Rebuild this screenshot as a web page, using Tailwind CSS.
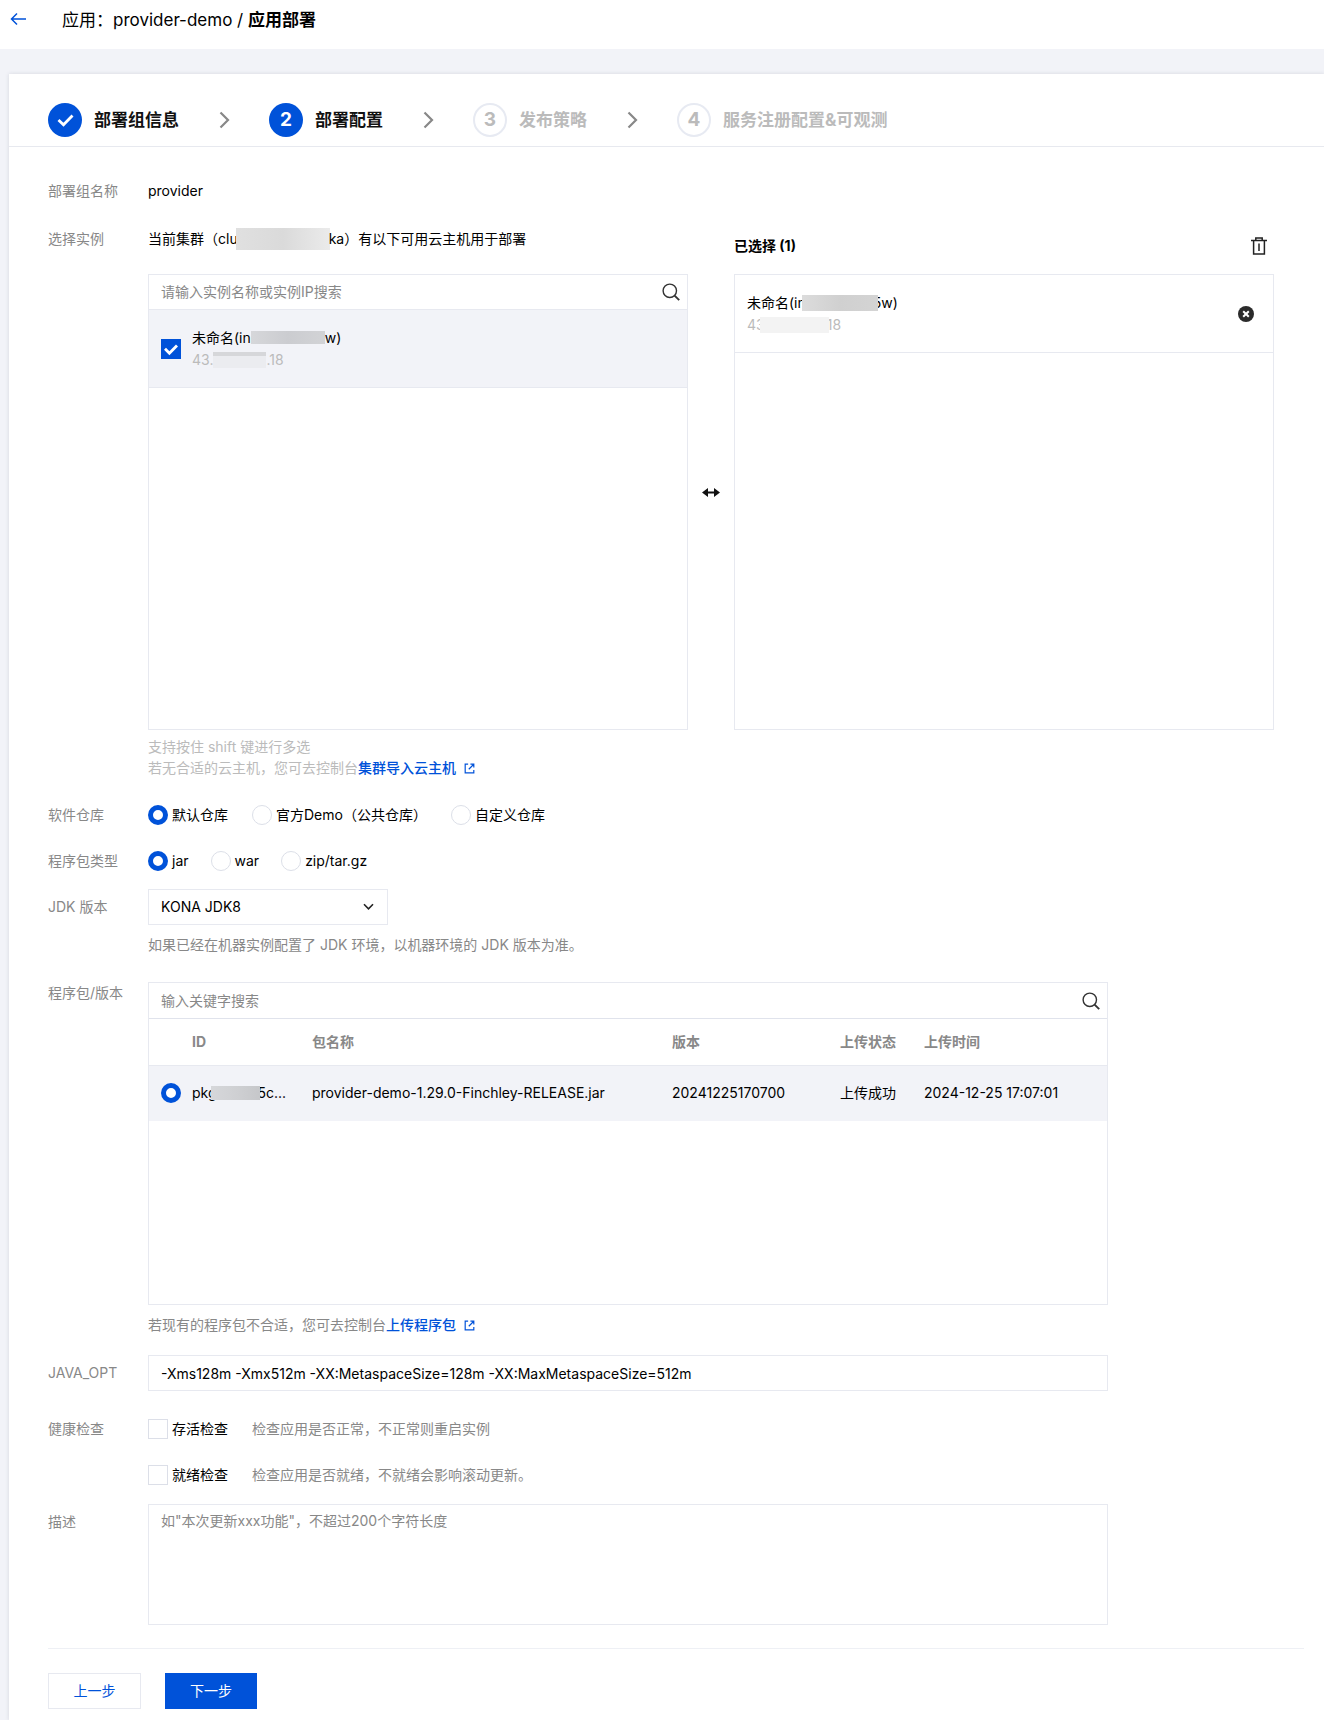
<!doctype html>
<html lang="zh-CN">
<head>
  <meta charset="utf-8">
  <meta name="viewport" content="width=device-width, initial-scale=1">
  <title>应用部署</title>
  <script src="https://cdn.jsdelivr.net/npm/@tailwindcss/browser@4"></script>
</head>
<body class="min-h-screen bg-[#f2f3f8] font-['Inter','Noto_Sans_CJK_SC',sans-serif] text-sm leading-[22px] text-black">

<!-- 图标 -->
<svg class="hidden">
  <symbol id="i-search" viewBox="0 0 18 18" fill="none" stroke="currentColor">
    <circle cx="7.8" cy="7.8" r="6.7" stroke-width="1.4"/>
    <path d="M12.6 12.6 17.2 17.2" stroke-width="1.9"/>
  </symbol>
  <symbol id="i-chevron" viewBox="0 0 12 18" fill="none" stroke="currentColor">
    <path d="m1.5 1.5 7.5 7.5-7.5 7.5" stroke-width="2.2"/>
  </symbol>
  <symbol id="i-check" viewBox="0 0 20 20" fill="none" stroke="currentColor">
    <path d="m4 9.8 4.4 4.4 7.6-7.8" stroke-width="2.8"/>
  </symbol>
  <symbol id="i-link" viewBox="0 0 12 12" fill="none" stroke="currentColor">
    <path d="M4.5 1.3H1.3v9.4h9.4V7.5M7 1.3h3.7V5M10.4 1.6 5.2 6.8" stroke-width="1.3"/>
  </symbol>
</svg>

<header class="h-[49px] bg-white flex items-start pl-[10px] pt-2">
  <button type="button" aria-label="返回" class="w-[17px] h-[22px] flex items-center text-[#0052d9]">
    <svg class="w-[17px] h-[14px]" viewBox="0 0 17 14" fill="none" stroke="currentColor" stroke-width="1.5"><path d="M7 1.5 1.5 7 7 12.5M1.5 7H16"/></svg>
  </button>
  <h1 class="ml-[35px] text-[17px] leading-6 whitespace-pre">应用：provider-demo / <b>应用部署</b></h1>
</header>

<main class="mt-[25px] ml-[9px] bg-white shadow-[0_0_4px_rgba(54,58,80,0.15)]">

  <!-- 步骤条 -->
  <ol class="h-[73px] pl-[39px] pt-5 flex items-center border-b border-[#e7e9ef] text-[17px] leading-6 font-bold whitespace-nowrap text-[#111]">
    <li class="flex items-center">
      <span class="size-[34px] rounded-full bg-[#0052d9] text-white flex items-center justify-center">
        <svg class="w-[17px] h-[13px]" viewBox="0 0 17 13" fill="none" stroke="currentColor" stroke-width="2.8"><path d="m1.5 6 5 4.8L15.5 1.5"/></svg>
      </span>
      <span class="ml-3">部署组信息</span>
      <svg class="ml-10 mr-[38px] w-3 h-[18px] text-[#888]"><use href="#i-chevron"/></svg>
    </li>
    <li class="flex items-center">
      <span class="size-[34px] rounded-full bg-[#0052d9] text-white text-[19px] flex items-center justify-center">2</span>
      <span class="ml-3">部署配置</span>
      <svg class="ml-10 mr-[38px] w-3 h-[18px] text-[#888]"><use href="#i-chevron"/></svg>
    </li>
    <li class="flex items-center text-[#bbb]">
      <span class="size-[34px] rounded-full border-2 border-[#e7eaf2] text-[19px] flex items-center justify-center">3</span>
      <span class="ml-3">发布策略</span>
      <svg class="ml-10 mr-[38px] w-3 h-[18px] text-[#888]"><use href="#i-chevron"/></svg>
    </li>
    <li class="flex items-center text-[#bbb]">
      <span class="size-[34px] rounded-full border-2 border-[#e7eaf2] text-[19px] flex items-center justify-center">4</span>
      <span class="ml-3">服务注册配置&amp;可观测</span>
    </li>
  </ol>

  <form class="pl-[39px] pr-5 pt-[33px] pb-[11px]">

    <div class="flex">
      <div class="w-[100px] shrink-0 text-[#888]">部署组名称</div>
      <div>provider</div>
    </div>

    <!-- 选择实例 -->
    <div class="flex mt-[26px]">
      <div class="w-[100px] shrink-0 text-[#888]">选择实例</div>
      <div class="flex-1 min-w-0 mr-[30px]">
        <div class="flex">
          <section class="flex-1 min-w-0">
            <p class="h-[46px] flex items-start whitespace-nowrap">当前集群（clu<span class="-ml-0.5 -mr-px w-[94px] h-[22px] bg-linear-to-r from-[#e0e0e0] via-[#dadada] to-[#ebebeb]"></span>ka）有以下可用云主机用于部署</p>
            <div class="h-[456px] border border-[#e7e9f0]">
              <div class="h-[35px] flex items-center border-b border-[#e7e9f0] pl-3 pr-[7px]">
                <input type="text" aria-label="搜索实例" placeholder="请输入实例名称或实例IP搜索" class="flex-1 min-w-0 outline-none placeholder:text-[#888]">
                <button type="button" aria-label="搜索" class="text-[#333]"><svg class="size-[18px]"><use href="#i-search"/></svg></button>
              </div>
              <label class="h-[78px] flex items-center bg-[#f2f3f8] border-b border-[#e7e9f0] pl-3">
                <span class="relative size-5 shrink-0">
                  <input type="checkbox" checked class="peer appearance-none block size-5 border border-[#dcdfe8] bg-white checked:bg-[#0052d9] checked:border-[#0052d9]">
                  <svg class="absolute inset-0 size-5 text-white pointer-events-none invisible peer-checked:visible"><use href="#i-check"/></svg>
                </span>
                <span class="ml-[11px]">
                  <span class="flex items-center">未命名(in<span class="w-[74px] h-[13px] bg-linear-to-r from-[#d6d7da] via-[#cbccd0] to-[#d2d3d6]"></span>w)</span>
                  <span class="flex items-center text-[#bbb]">43.<span class="w-[53px] h-4 bg-[#ebecf0] border-t-4 border-[#d6d7da]"></span>.18</span>
                </span>
              </label>
            </div>
          </section>

          <div class="w-[46px] shrink-0 flex justify-center items-start pt-[259px]">
            <svg class="w-[18px] h-[11px] text-[#111]" viewBox="0 0 18 11" fill="currentColor"><path d="M0 5.5 6 1v3.6h6V1l6 4.5-6 4.5V6.4H6V10z"/></svg>
          </div>

          <section class="flex-1 min-w-0">
            <div class="h-[46px] pt-[7px] pr-[7px] flex items-start justify-between">
              <h2 class="font-bold">已选择 (1)</h2>
              <button type="button" aria-label="清空" class="h-[22px] flex items-center text-[#222]">
                <svg class="w-4 h-[18px]" viewBox="0 0 16 18" fill="none" stroke="currentColor" stroke-width="1.5"><path d="M0 3.6h16M4.8 3.6V.9h6.4v2.7M2.6 3.6v13.5h10.8V3.6M8 6.5v7.5"/></svg>
              </button>
            </div>
            <div class="h-[456px] border border-[#e7e9f0]">
              <div class="h-[78px] flex items-center justify-between border-b border-[#e7e9f0] pl-3 pr-[19px]">
                <div>
                  <div class="flex items-center">未命名(in<span class="relative -ml-1 -mr-[5px] w-[76px] h-4 bg-linear-to-r from-[#dcdcdc] via-[#d0d0d0] to-[#d4d4d4]"></span>5w)</div>
                  <div class="flex items-center text-[#bbb]">43<span class="relative -ml-[5px] -mr-0.5 w-[69px] h-4 bg-[#f3f3f3]"></span>18</div>
                </div>
                <button type="button" aria-label="移除" class="text-[#2b2b2b]">
                  <svg class="size-4" viewBox="0 0 16 16"><circle cx="8" cy="8" r="8" fill="currentColor"/><path d="m5.2 5.2 5.6 5.6M10.8 5.2l-5.6 5.6" stroke="#fff" stroke-width="2"/></svg>
                </button>
              </div>
            </div>
          </section>
        </div>
        <p class="mt-[6px] leading-[21px] text-[#bbb]">支持按住 shift 键进行多选<br>若无合适的云主机，您可去控制台<a href="#" class="text-[#0052d9] font-medium">集群导入云主机<svg class="inline ml-2 size-[11px] align-[-1px]"><use href="#i-link"/></svg></a></p>
      </div>
    </div>

    <!-- 软件仓库 -->
    <div class="flex mt-[26px]">
      <div class="w-[100px] shrink-0 text-[#888]">软件仓库</div>
      <div class="flex gap-6">
        <label class="flex items-center gap-1"><input type="radio" name="repo" checked class="appearance-none size-5 rounded-full border border-[#dcdfe8] bg-white checked:border-5 checked:border-[#0052d9]">默认仓库</label>
        <label class="flex items-center gap-1"><input type="radio" name="repo" class="appearance-none size-5 rounded-full border border-[#dcdfe8] bg-white checked:border-5 checked:border-[#0052d9]">官方Demo（公共仓库）</label>
        <label class="flex items-center gap-1"><input type="radio" name="repo" class="appearance-none size-5 rounded-full border border-[#dcdfe8] bg-white checked:border-5 checked:border-[#0052d9]">自定义仓库</label>
      </div>
    </div>

    <!-- 程序包类型 -->
    <div class="flex mt-6">
      <div class="w-[100px] shrink-0 text-[#888]">程序包类型</div>
      <div class="flex gap-[22px]">
        <label class="flex items-center gap-1"><input type="radio" name="pkgType" checked class="appearance-none size-5 rounded-full border border-[#dcdfe8] bg-white checked:border-5 checked:border-[#0052d9]">jar</label>
        <label class="flex items-center gap-1"><input type="radio" name="pkgType" class="appearance-none size-5 rounded-full border border-[#dcdfe8] bg-white checked:border-5 checked:border-[#0052d9]">war</label>
        <label class="flex items-center gap-1"><input type="radio" name="pkgType" class="appearance-none size-5 rounded-full border border-[#dcdfe8] bg-white checked:border-5 checked:border-[#0052d9]">zip/tar.gz</label>
      </div>
    </div>

    <!-- JDK -->
    <div class="flex mt-[17px]">
      <label for="jdk" class="w-[100px] shrink-0 pt-[7px] text-[#888]">JDK 版本</label>
      <div>
        <div class="relative w-60">
          <select id="jdk" class="appearance-none w-full h-9 border border-[#e7e9f0] bg-white px-3"><option>KONA JDK8</option></select>
          <svg class="absolute right-[14px] top-[14px] w-[11px] h-2 pointer-events-none text-[#222]" viewBox="0 0 11 8" fill="none" stroke="currentColor" stroke-width="1.6"><path d="m1 1.2 4.5 4.6L10 1.2"/></svg>
        </div>
        <p class="mt-[9px] text-[#888]">如果已经在机器实例配置了 JDK 环境，以机器环境的 JDK 版本为准。</p>
      </div>
    </div>

    <!-- 程序包/版本 -->
    <div class="flex mt-[26px]">
      <div class="w-[100px] shrink-0 text-[#888]">程序包/版本</div>
      <div class="flex-1 max-w-[960px]">
        <div class="h-[323px] border border-[#e7e9f0]">
          <div class="h-9 flex items-center border-b border-[#e0e3ec] pl-3 pr-[7px]">
            <input type="text" aria-label="搜索程序包" placeholder="输入关键字搜索" class="flex-1 min-w-0 outline-none placeholder:text-[#888]">
            <button type="button" aria-label="搜索" class="text-[#333]"><svg class="size-[18px]"><use href="#i-search"/></svg></button>
          </div>
          <table class="w-full table-fixed text-left whitespace-nowrap">
            <colgroup><col class="w-[43px]"><col class="w-[120px]"><col><col class="w-[168px]"><col class="w-[84px]"><col class="w-[183px]"></colgroup>
            <thead>
              <tr class="h-[46px] border-b border-[#e7e9f0] text-[#888]">
                <th></th><th>ID</th><th>包名称</th><th>版本</th><th>上传状态</th><th>上传时间</th>
              </tr>
            </thead>
            <tbody>
              <tr class="h-14 bg-[#f2f3f8]">
                <td class="pl-3"><input type="radio" name="pkg" checked aria-label="选择程序包" class="appearance-none block size-5 rounded-full border border-[#dcdfe8] bg-white checked:border-5 checked:border-[#0052d9]"></td>
                <td><span class="flex items-center">pkg<span class="relative -ml-[6px] -mr-0.5 w-[49px] h-[14px] bg-linear-to-r from-[#d6d7da] via-[#cfd0d3] to-[#c6c7ca]"></span>5c...</span></td>
                <td>provider-demo-1.29.0-Finchley-RELEASE.jar</td>
                <td>20241225170700</td>
                <td>上传成功</td>
                <td>2024-12-25 17:07:01</td>
              </tr>
            </tbody>
          </table>
        </div>
        <p class="mt-[9px] text-[#888]">若现有的程序包不合适，您可去控制台<a href="#" class="text-[#0052d9] font-medium">上传程序包<svg class="inline ml-2 size-[11px] align-[-1px]"><use href="#i-link"/></svg></a></p>
      </div>
    </div>

    <div class="flex mt-[19px]">
      <label for="javaOpt" class="w-[100px] shrink-0 pt-[7px] text-[#888]">JAVA_OPT</label>
      <input id="javaOpt" type="text" value="-Xms128m -Xmx512m -XX:MetaspaceSize=128m -XX:MaxMetaspaceSize=512m" class="flex-1 max-w-[960px] h-9 border border-[#e7e9f0] px-3 outline-none">
    </div>

    <!-- 健康检查 -->
    <div class="flex mt-[27px]">
      <div class="w-[100px] shrink-0 text-[#888]">健康检查</div>
      <div class="space-y-6">
        <div class="flex items-center">
          <label class="flex items-center gap-1"><input type="checkbox" class="appearance-none size-5 border border-[#dcdfe8] bg-white checked:bg-[#0052d9]">存活检查</label>
          <span class="ml-6 text-[#888]">检查应用是否正常，不正常则重启实例</span>
        </div>
        <div class="flex items-center">
          <label class="flex items-center gap-1"><input type="checkbox" class="appearance-none size-5 border border-[#dcdfe8] bg-white checked:bg-[#0052d9]">就绪检查</label>
          <span class="ml-6 text-[#888]">检查应用是否就绪，不就绪会影响滚动更新。</span>
        </div>
      </div>
    </div>

    <div class="flex mt-[18px]">
      <label for="desc" class="w-[100px] shrink-0 pt-[7px] text-[#888]">描述</label>
      <textarea id="desc" placeholder="如&quot;本次更新xxx功能&quot;，不超过200个字符长度" class="flex-1 max-w-[960px] h-[121px] resize-none border border-[#e7e9f0] px-3 py-[5px] outline-none placeholder:text-[#888]"></textarea>
    </div>

    <div class="mt-[23px] pt-6 flex gap-6 border-t border-[#eef0f5]">
      <button type="button" class="w-[93px] h-9 border border-[#e7e9f0] text-[#0052d9]">上一步</button>
      <button type="button" class="w-[92px] h-9 bg-[#0052d9] text-white">下一步</button>
    </div>
  </form>
</main>
</body>
</html>
